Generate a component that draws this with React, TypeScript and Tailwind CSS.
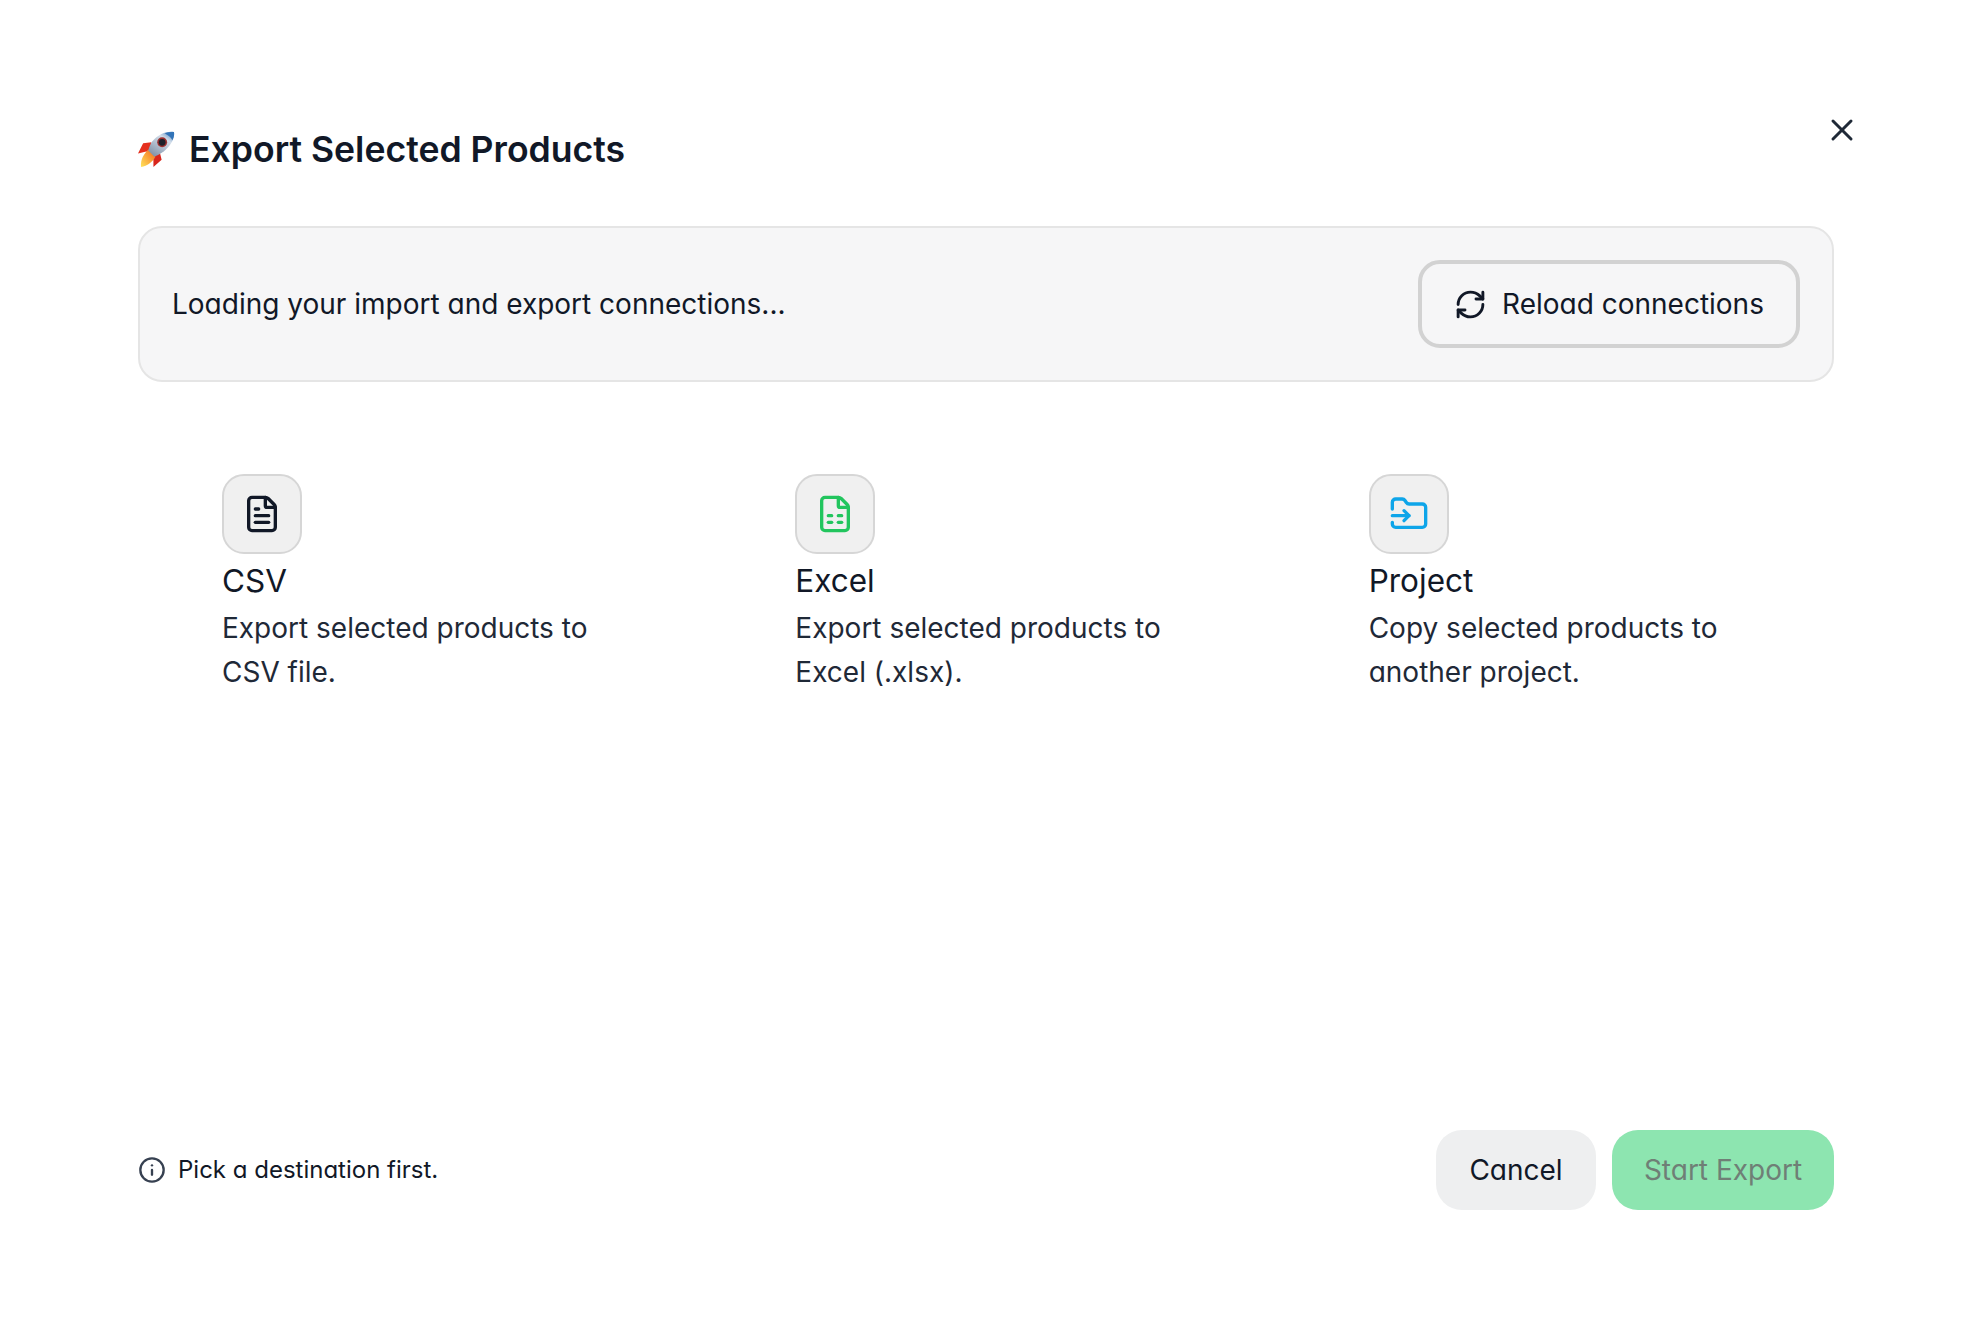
import { FileSpreadsheet, FileText, FolderInput, Info, RefreshCw, X } from 'lucide-react'
import type { ReactNode } from 'react'

function Rocket() {
  return (
    <svg viewBox="0 0 36 36" className="h-[37px] w-[37px] shrink-0" aria-hidden="true">
      <defs>
        <linearGradient id="rocketBody" x1="0.9" y1="0" x2="0.2" y2="1">
          <stop offset="0" stopColor="#4f86c0" />
          <stop offset="0.3" stopColor="#d3deea" />
          <stop offset="1" stopColor="#7f90a6" />
        </linearGradient>
        <linearGradient id="rocketFlame" x1="1" y1="0" x2="0" y2="1">
          <stop offset="0" stopColor="#f4661b" />
          <stop offset="1" stopColor="#ffe45c" />
        </linearGradient>
      </defs>
      <path d="M13 11 L5 12 L0 22 L8 20 L12 22 Z" fill="#e5301f" />
      <path d="M21 20 L23 28 L15 35 L15 28 L13 24 Z" fill="#d8261c" />
      <path d="M10 18 C6 22 2 28 3 35 C9 34 14 30 17 25 Z" fill="url(#rocketFlame)" />
      <path
        d="M35 1 C28 0 20 3 14 10 C11 14 10 19 10 19 L16 25 C16 25 21 23 25 20 C31 15 36 8 35 1 Z"
        fill="url(#rocketBody)"
      />
      <path d="M35 1 C31 0.5 28 1.5 26 2.5 C29 4 32 6 33.5 9 C35 6 35.5 3 35 1 Z" fill="#3274b8" />
      <circle cx="23.5" cy="11" r="4.8" fill="#9c3030" />
      <circle cx="23.5" cy="11" r="3.3" fill="#1c2029" />
    </svg>
  )
}

function DestinationCard({
  icon,
  title,
  lines,
}: {
  icon: ReactNode
  title: string
  lines: string
}) {
  return (
    <div className="px-[84px]">
      <div className="flex h-[80px] w-[80px] items-center justify-center rounded-[22px] border-2 border-[#d6d6d6] bg-[#f0f0f0]">
        {icon}
      </div>
      <h3 className="mb-[3px] mt-[5px] text-[31.5px] leading-[44px] text-[#111827]">{title}</h3>
      <p className="text-[28px] leading-[44px] text-[#1f2937]">{lines}</p>
    </div>
  )
}

export default function App() {
  return (
    <div className="min-h-screen bg-white font-[Inter,sans-serif] text-[#111827] [font-feature-settings:'cv11']">
      <div className="relative mx-auto flex h-[1332px] w-[1696px] flex-col pb-[122px] pt-[125px]">
        <button className="absolute right-[-26px] top-[112px] text-[#1f2937]" aria-label="Close">
          <X size={36} strokeWidth={2} />
        </button>

        <div className="flex h-[48px] items-center gap-[14px]">
          <Rocket />
          <h2 className="pt-[2px] text-[35.6px] font-semibold leading-[48px]">
            Export Selected Products
          </h2>
        </div>

        <div className="mt-[53px] flex h-[156px] items-center justify-between rounded-[24px] border-2 border-[#e5e5e5] bg-[#f6f6f7] pl-[32px] pr-[32px]">
          <span className="text-[28px]">Loading your import and export connections...</span>
          <button className="flex h-[88px] w-[382px] items-center justify-center gap-[15px] rounded-[22px] border-4 border-[#d2d2d2] text-[28px]">
            <RefreshCw size={33} strokeWidth={2.1} />
            Reload connections
          </button>
        </div>

        <div className="mt-[92px] grid grid-cols-3 gap-6">
          <DestinationCard
            icon={<FileText size={40} strokeWidth={2} className="text-[#111827]" />}
            title="CSV"
            lines="Export selected products to CSV file."
          />
          <DestinationCard
            icon={<FileSpreadsheet size={40} strokeWidth={2} className="text-[#22c55e]" />}
            title="Excel"
            lines="Export selected products to Excel (.xlsx)."
          />
          <DestinationCard
            icon={<FolderInput size={40} strokeWidth={2} className="text-[#0ea5e9]" />}
            title="Project"
            lines="Copy selected products to another project."
          />
        </div>

        <div className="mt-auto flex items-center justify-between">
          <div className="flex items-center gap-[12px] text-[24px]">
            <Info size={28} strokeWidth={2} className="text-[#374151]" />
            Pick a destination first.
          </div>
          <div className="flex items-center gap-[16px]">
            <button className="h-[80px] w-[160px] rounded-[26px] bg-[#eeeff0] text-[28px]">
              Cancel
            </button>
            <button className="h-[80px] w-[222px] rounded-[26px] bg-[#8de5b0] text-[28px] text-[#6f7f76]">
              Start Export
            </button>
          </div>
        </div>
      </div>
    </div>
  )
}
